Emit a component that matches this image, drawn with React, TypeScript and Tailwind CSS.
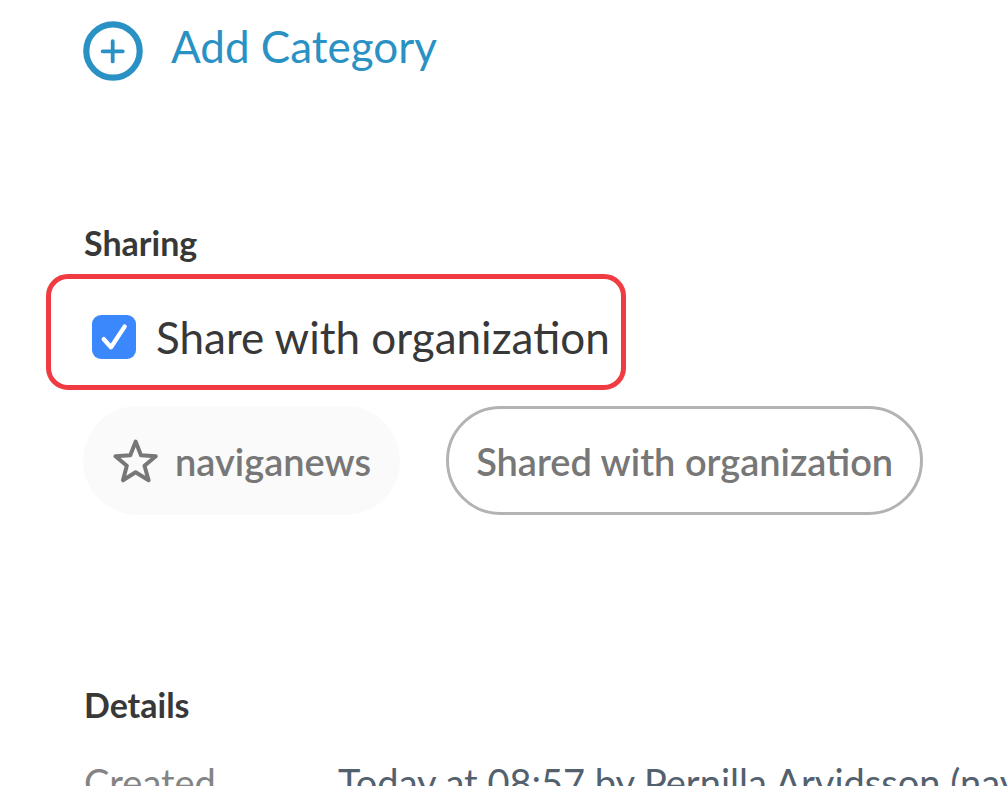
import React from "react";

export default function App() {
  return (
    <main className="h-screen overflow-hidden bg-white pl-[84px] pt-[21px] font-['Lato','Liberation_Sans',sans-serif] text-[#383838]">
      <button type="button" className="-ml-px flex items-start gap-7 text-[#2a91c4]">
        <svg className="size-[60px]" viewBox="0 0 60 60" fill="none" stroke="currentColor" strokeLinecap="round" aria-hidden="true">
          <circle cx="30" cy="30" r="26.7" strokeWidth="6.2" />
          <path d="M29.700 20.200v20.200M19.600 30.300h20.200" strokeWidth="3.8" />
        </svg>
        <span className="text-[44px] leading-[50px]">Add Category</span>
      </button>

      <section className="pt-[141px]">
        <h2 className="text-[34px] leading-[42px] font-bold">Sharing</h2>
        <label className="mt-[10px] -ml-[38px] flex h-[116px] w-[580px] items-center gap-5 rounded-[22px] border-[5px] border-[#ef3b41] pt-[10px] pl-[41px] whitespace-nowrap">
          <span className="grid size-[44px] shrink-0 place-items-center">
            <input type="checkbox" defaultChecked className="peer col-start-1 row-start-1 size-[44px] appearance-none rounded-[9px] bg-white ring-2 ring-inset ring-[#999999] checked:bg-[#3b88fd] checked:ring-0" />
            <svg className="pointer-events-none invisible col-start-1 row-start-1 size-[44px] peer-checked:visible" viewBox="0 0 44 44" fill="none" stroke="white" strokeWidth="4.4" strokeLinecap="round" strokeLinejoin="round" aria-hidden="true">
              <path d="M11.800 24.200l7.200 8L32.600 11.600" />
            </svg>
          </span>
          <span className="text-[44px] leading-[52px]">Share with organization</span>
        </label>
        <div className="mt-4 -ml-px flex gap-[46px] text-[38px] leading-[44px] font-semibold text-[#777777]">
          <div className="flex h-[109px] items-center gap-4 rounded-full bg-[#fafafa] pr-[29px] pl-[30px]">
            <svg className="size-[46px]" viewBox="0 0 46 46" fill="none" stroke="currentColor" strokeWidth="4" strokeLinejoin="round" aria-hidden="true">
              <path d="M22.600 3.600L28 17.300L42.800 18.300L31.500 27.700L35.600 42.300L22.600 34.300L10 42.300L13.800 27.700L2.500 18.300L17.300 17.300Z" />
            </svg>
            <span>naviganews</span>
          </div>
          <div className="flex h-[109px] items-center rounded-full border-[3px] border-[#b3b3b3] px-[27px] whitespace-nowrap">Shared with organization</div>
        </div>
      </section>

      <section className="pt-[169px]">
        <h2 className="text-[34px] leading-[42px] font-bold">Details</h2>
        <dl className="mt-[34px] flex text-[38px] leading-[44px] whitespace-nowrap">
          <dt className="w-[254px] shrink-0 text-[#848484]">Created</dt>
          <dd className="text-[#53616f]">Today at 08:57 by Pernilla Arvidsson (naviganews)</dd>
        </dl>
      </section>
    </main>
  );
}
